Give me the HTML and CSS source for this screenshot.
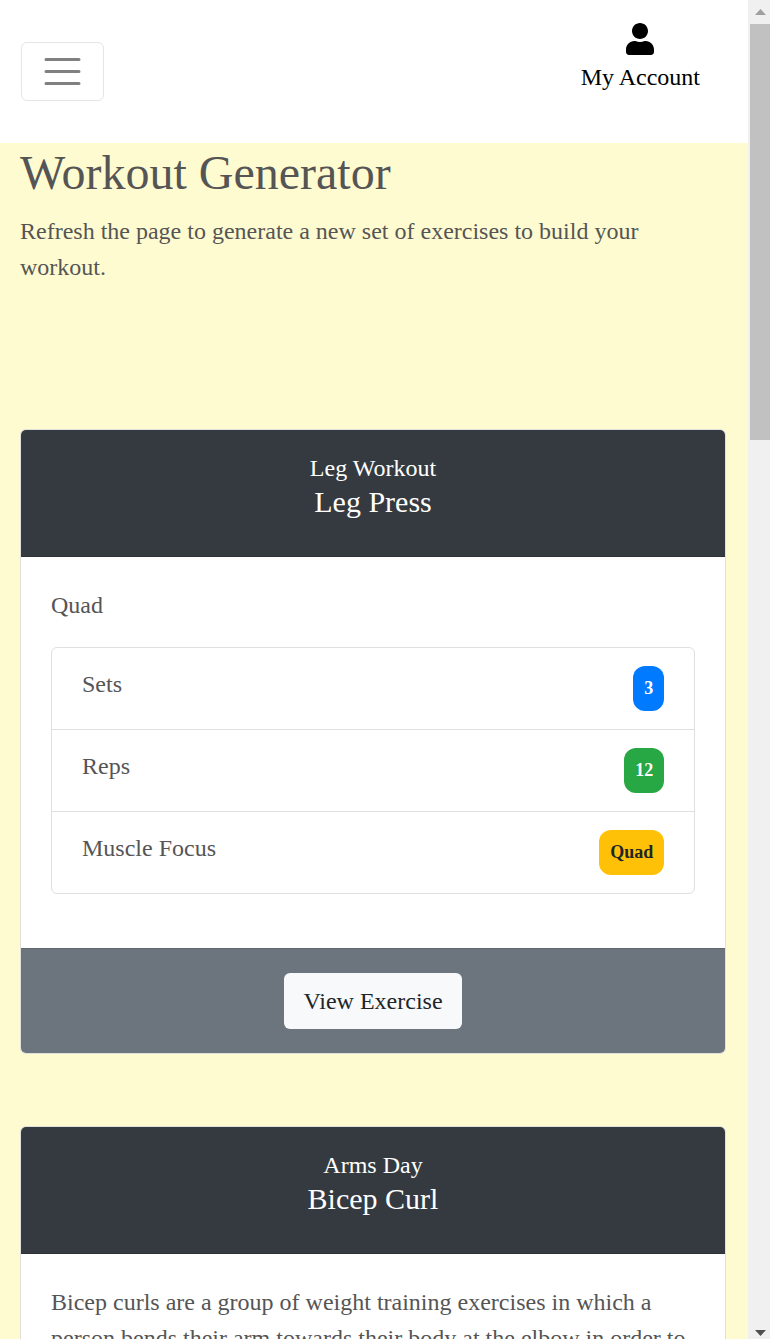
FILE: index.html
```html
<!DOCTYPE html>
<html lang="en">
<head>
<meta charset="utf-8">
<title>Workout Generator</title>
<link rel="stylesheet" href="styles.css">
</head>
<body>
<div class="window">
  <div class="page">
    <header class="navbar">
      <button class="toggler" aria-label="Menu">
        <svg width="45" height="45" viewBox="0 0 30 30"><path d="M4 7h22M4 15h22M4 23h22" stroke="#808080" stroke-width="2" stroke-linecap="round"/></svg>
      </button>
      <a class="account">
        <svg class="account-icon" width="28" height="32" viewBox="0 0 448 512"><path d="M224 256c70.700 0 128-57.300 128-128S294.700 0 224 0 96 57.300 96 128s57.300 128 128 128zm89.600 32h-16.700c-22.200 10.200-46.900 16-72.900 16s-50.600-5.800-72.900-16h-16.700C60.200 288 0 348.200 0 422.400V464c0 26.500 21.500 48 48 48h352c26.500 0 48-21.500 48-48v-41.600c0-74.200-60.200-134.400-134.400-134.400z"/></svg>
        <span>My Account</span>
      </a>
    </header>
    <main class="content">
      <h2 class="title">Workout Generator</h2>
      <p class="intro">Refresh the page to generate a new set of exercises to build your workout.</p>
      <div class="cards">
        <section class="card">
          <div class="card-header">
            <div>Leg Workout</div>
            <h5 class="card-title">Leg Press</h5>
          </div>
          <div class="card-body">
            <p class="card-text">Quad</p>
            <ul class="list">
              <li class="item"><span>Sets</span><span class="badge blue">3</span></li>
              <li class="item"><span>Reps</span><span class="badge green">12</span></li>
              <li class="item"><span>Muscle Focus</span><span class="badge yellow">Quad</span></li>
            </ul>
          </div>
          <div class="card-footer"><a class="btn">View Exercise</a></div>
        </section>
        <section class="card">
          <div class="card-header">
            <div>Arms Day</div>
            <h5 class="card-title">Bicep Curl</h5>
          </div>
          <div class="card-body">
            <p class="card-text">Bicep curls are a group of weight training exercises in which a person bends their arm towards their body at the elbow in order to</p>
          </div>
        </section>
      </div>
    </main>
  </div>
  <div class="scrollbar">
    <svg class="arrow" width="22" height="24" viewBox="0 0 22 24"><path d="M7 15h11l-5.500-6z" fill="#a0a0a0"/></svg>
    <div class="thumb"></div>
    <svg class="arrow" width="22" height="24" viewBox="0 0 22 24"><path d="M7 15h11l-5.500 6z" fill="#505050"/></svg>
  </div>
</div>
</body>
</html>
```
FILE: styles.css
```css
* { box-sizing: border-box; }
body {
  margin: 0;
  font: 24px/36px "Liberation Serif", "Times New Roman", serif;
  color: #555;
}
svg { display: block; }
.window { display: flex; height: 1339px; overflow: hidden; }
.page { width: 748px; height: 1339px; overflow: hidden; background: #fffbd0; }
.navbar {
  display: flex;
  justify-content: space-between;
  align-items: flex-start;
  height: 143px;
  padding: 23px 48px 0 21px;
  background: #fff;
}
.toggler {
  display: flex;
  align-items: center;
  justify-content: center;
  width: 83px;
  height: 59px;
  margin-top: 19px;
  padding: 0;
  background: none;
  border: 1px solid #e5e5e5;
  border-radius: 6px;
}
.account { display: flex; flex-direction: column; align-items: center; color: #000; }
.account-icon { margin-bottom: 4px; }
.content { padding: 0 22px 0 20px; }
.title { margin: 0; padding-top: 1px; font-size: 48px; font-weight: 400; line-height: 58px; }
.intro { margin: 11px 0 144px; }
.cards { display: flex; flex-direction: column; gap: 72px; }
.card { background: #fff; border: 1px solid #dfdfdc; border-radius: 6px; overflow: hidden; }
.card-header {
  height: 127px;
  padding: 20px 30px 0;
  text-align: center;
  color: #fff;
  background: #343a40;
  border-bottom: 1px solid #2d3238;
}
.card-title { margin: -2px 0 0; font-size: 30px; font-weight: 400; line-height: 36px; }
.card-body { padding: 30px; }
.card-text { margin: 0 0 24px; }
.list { list-style: none; margin: 0 0 24px; padding: 0; border: 1px solid #dfdfdf; border-radius: 6px; }
.item { display: flex; justify-content: space-between; padding: 18px 30px; }
.item + .item { border-top: 1px solid #dfdfdf; }
.badge {
  height: 45px;
  padding: 0 10.8px;
  font-size: 18px;
  font-weight: 700;
  line-height: 45px;
  color: #fff;
  border-radius: 12px;
}
.blue { background: #007bff; }
.green { background: #28a745; }
.yellow { color: #212529; background: #ffc107; }
.card-footer {
  display: flex;
  justify-content: center;
  padding: 24px 30px;
  background: #6c757d;
  border-top: 1px solid #5f676f;
}
.btn { padding: 10px 19px; color: #212529; background: #f8f9fa; border-radius: 6px; }
.scrollbar { display: flex; flex-direction: column; width: 22px; background: #f0f0f0; }
.thumb { height: 416px; margin: 0 0 auto 2px; background: #c1c1c1; }
```
